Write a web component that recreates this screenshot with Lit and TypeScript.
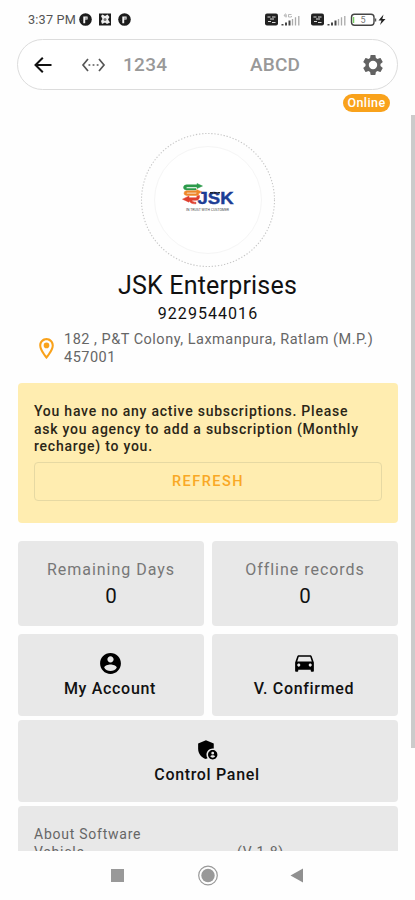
import { LitElement, html, css, svg } from "lit";
import { customElement, property } from "lit/decorators.js";

const account = svg`<path d="M12 2C6.48 2 2 6.48 2 12s4.48 10 10 10 10-4.48 10-10S17.52 2 12 2zm0 3c1.66 0 3 1.34 3 3s-1.34 3-3 3-3-1.34-3-3 1.340-3 3-3zm0 14.2c-2.500 0-4.710-1.280-6-3.220.030-1.990 4-3.080 6-3.080 1.990 0 5.970 1.090 6 3.080-1.290 1.940-3.500 3.220-6 3.220z"/>`;
const car = svg`<path d="M18.920 5.010C18.720 4.420 18.160 4 17.500 4h-11c-.660 0-1.210.420-1.420 1.010L3 11v8c0 .550.450 1 1 1h1c.550 0 1-.450 1-1v-1h12v1c0 .550.450 1 1 1h1c.550 0 1-.450 1-1v-8l-2.080-5.990zM6.500 15c-.830 0-1.500-.670-1.500-1.500S5.670 12 6.500 12s1.500.670 1.500 1.500S7.330 15 6.500 15zm11 0c-.830 0-1.500-.670-1.500-1.500s.670-1.500 1.500-1.500 1.500.670 1.500 1.500-.670 1.500-1.500 1.500zM5 10l1.500-4.500h11L19 10H5z"/>`;
const admin = svg`<path d="M17 11c.34 0 .67.04 1 .09V6.270L10.500 3 3 6.270v4.910c0 4.540 3.200 8.790 7.500 9.820.550-.130 1.080-.320 1.600-.550-.690-.980-1.100-2.170-1.100-3.450 0-3.310 2.690-6 6-6z"/><path fill-rule="evenodd" d="M17 12.500c-2.480 0-4.500 2.020-4.500 4.500s2.020 4.500 4.500 4.500 4.500-2.020 4.500-4.500-2.020-4.500-4.500-4.500zm0 1.700a1.350 1.350 0 1 1 0 2.700 1.350 1.350 0 0 1 0-2.700zm0 5.600c-1 0-1.850-.5-2.350-1.250.05-.75 1.600-1.150 2.350-1.150s2.300.4 2.350 1.150c-.5.75-1.350 1.250-2.350 1.250z"/>`;

@customElement("menu-tile")
class MenuTile extends LitElement {
  @property() label = "";
  @property({ attribute: false }) icon: unknown = null;
  static styles = css`
    :host { display: flex; flex-direction: column; align-items: center; box-sizing: border-box; height: 82px; padding-top: 17px; background: #e8e8e8; border-radius: 4px; }
    svg { width: 25px; height: 25px; fill: #000; display: block; margin-right: 2px; }
    span { font-size: 16px; line-height: 20px; margin-top: 3px; margin-right: 2px; font-weight: 500; letter-spacing: 0.68px; color: #111; white-space: nowrap; }
  `;
  render() {
    return html`<svg viewBox="0 0 24 24">${this.icon}</svg><span>${this.label}</span>`;
  }
}

@customElement("app-root")
class AppRoot extends LitElement {
  static styles = css`
    :host { display: flex; flex-direction: column; width: 415px; height: 900px; background: #fefefe; overflow: hidden; font-family: Roboto, sans-serif; color: #111; position: relative; }
    svg { display: block; flex: none; }
    .status { height: 39px; box-sizing: border-box; padding: 0 27px 0 28px; display: flex; align-items: center; justify-content: space-between; }
    .time { display: flex; align-items: center; font-size: 12.7px; color: #555; white-space: nowrap; }
    .clock { width: 51px; letter-spacing: 0.2px; }
    .bar { margin: 0 17px; height: 51px; box-sizing: border-box; border: 1px solid #dcdcdc; border-radius: 26px; display: flex; align-items: center; background: #fff; flex: none; color: #999; font-weight: 500; font-size: 19px; }
    .back { margin-left: 13px; }
    .dots { margin-left: 26px; }
    .num { margin-left: 17px; width: 127px; letter-spacing: 0.3px; }
    .abc { width: 111px; letter-spacing: 0.2px; }
    .online { align-self: flex-end; margin: 4px 25px 0 0; height: 18px; width: 47px; border-radius: 9px; background: #f9a21b; color: #fff; font-size: 12.5px; font-weight: 500; line-height: 18px; text-align: center; letter-spacing: 0.4px; flex: none; }
    .scroll { position: absolute; right: 0; top: 115px; width: 4px; height: 633px; background: #cbcbcb; }
    .content { height: 739px; overflow: hidden; flex: none; }
    .avatar { margin: 20px auto 0; width: 136px; height: 136px; }
    h1 { margin: 4px 0 0; font-size: 25px; line-height: 28px; font-weight: 400; text-align: center; letter-spacing: 0.2px; }
    .phone { font-size: 16px; line-height: 20px; margin: 4px 0 0 1px; text-align: center; letter-spacing: 1.05px; }
    .addr { display: flex; margin: 7px 0 0 34px; align-items: center; }
    .addr svg { position: relative; top: -1px; }
    .addr p { margin: 0 0 0 5px; font-size: 14.5px; line-height: 18px; color: #666; letter-spacing: 0.5px; white-space: nowrap; }
    .notice { margin: 16px 17px 0 18px; height: 140px; box-sizing: border-box; padding: 20px 16px 0; background: #ffedb0; border-radius: 4px; }
    .notice p { margin: 0; font-size: 14px; line-height: 17.7px; font-weight: 500; letter-spacing: 0.76px; color: #2b2617; white-space: nowrap; }
    .refresh { margin-top: 6px; height: 39px; box-sizing: border-box; border: 1px solid #e6d9a3; border-radius: 4px; text-align: center; line-height: 38px; color: #f9a825; font-size: 14.5px; font-weight: 500; letter-spacing: 1.5px; }
    .grid { margin: 17.500px 17px 0 18px; display: grid; grid-template-columns: 186px 1fr; column-gap: 8px; row-gap: 4px; }
    .stat { height: 85px; box-sizing: border-box; padding-top: 18px; margin-bottom: 4px; background: #e8e8e8; border-radius: 4px; text-align: center; }
    .label { font-size: 16px; line-height: 22px; color: #777; letter-spacing: 0.98px; }
    .value { font-size: 20.5px; line-height: 28px; margin-top: 1px; }
    .wide { grid-column: 1 / 3; }
    .about { height: 90px; background: #e8e8e8; border-radius: 4px; padding: 19px 16px 0; box-sizing: border-box; font-size: 14px; line-height: 18px; color: #666; letter-spacing: 0.75px; }
    .row { display: flex; }
    .row span:first-child { width: 203px; }
    .nav { height: 49px; }
  `;
  render() {
    const badge = svg`<circle cx="6.500" cy="6.500" r="6.300" fill="#1c1c1c"/><path d="M4.300 10.300V3.500h4.300v3H6.200v3.800z" fill="#f4f4f4"/><path d="M7 4.500v1.300M2 7l1 1" stroke="#333" stroke-width="1"/>`;
    const bars = svg`<path d="M.5 11V9.500h2V11zM4 11V8h2v3zM7.500 11V6h2v5z" fill="#444"/><path d="M11.500 11V4.500M14.500 11V2.800M17.800 11V1.500" stroke="#aaa" stroke-width="1.300"/>`;
    const volte = svg`<rect width="13" height="12" rx="2" fill="#222"/><path d="M2.500 3.500h3M7 3.500h3.500M3 8h3m1 1h3.500M5 5.500h4" stroke="#ddd" stroke-width="1.200" fill="none"/>`;
    return html`
      <div class="status">
        <div class="time">
          <span class="clock">3:37 PM</span>
          <svg width="54" height="13" viewBox="0 0 54 13">${badge}
            <g transform="translate(20 0)"><rect x="0" y=".5" width="12" height="12" fill="#1c1c1c"/><path d="M3.500 1.500 6 3l2.500-1.500L10.500 4 9 6.500l2 3-3 1.500-2-1.500-3 1.500-1-3 1.500-2-1.500-3z" fill="#eee"/><circle cx="6" cy="6.500" r="1.500" fill="#777"/></g>
            <g transform="translate(39 0)">${badge}</g>
          </svg>
        </div>
        <svg width="124" height="14" viewBox="0 0 124 14">
          <g transform="translate(1 .5)">${volte}</g>
          <path d="M21.500.5 20 3h3m-1-2v3.500M27.500 1.500h-3V4h3V3" stroke="#aaa" stroke-width=".8" fill="none"/>
          <g transform="translate(17 1.500)">${bars}</g>
          <g transform="translate(47 .5)">${volte}</g>
          <g transform="translate(63 1.500)">${bars}</g>
          <rect x="87.500" y="1.300" width="22.500" height="11" rx="3" fill="#fff" stroke="#444" stroke-width="1.400"/>
          <path d="M89.500 4v6" stroke="#78cf65" stroke-width="1.500"/><path d="M111.500 5.500v3" stroke="#555" stroke-width="1.500"/>
          <text x="96.500" y="10" font-size="9" fill="#777">5</text>
          <path d="M119.500 1.500 114.500 7.500h3l-1.500 4.500 5.500-6h-3.200z" fill="#222"/>
        </svg>
      </div>
      <div class="bar">
        <svg class="back" width="24" height="24" viewBox="0 0 24 24" fill="none" stroke="#111" stroke-width="2"><path d="M20.500 12H5M11.800 4.700 4.500 12l7.300 7.300"/></svg>
        <svg class="dots" width="25" height="24" viewBox="0 0 25 24" fill="none" stroke="#555" stroke-width="1.700"><path d="M7 6 2 12l5 6M18 6l5 6-5 6"/><path d="M7.500 12h1.800m2.300 0h1.800m2.300 0h1.800" stroke-width="1.600"/></svg>
        <span class="num">1234</span><span class="abc">ABCD</span>
        <svg width="24" height="24" viewBox="0 0 24 24" fill="#626262"><path fill-rule="evenodd" d="M19.430 12.980c.040-.320.070-.640.070-.980s-.030-.660-.070-.980l2.110-1.650c.190-.150.240-.420.120-.640l-2-3.460c-.120-.220-.390-.300-.610-.220l-2.490 1c-.520-.400-1.080-.730-1.690-.980l-.380-2.650C14.460 2.180 14.250 2 14 2h-4c-.250 0-.460.180-.490.420l-.380 2.650c-.610.250-1.170.590-1.690.980l-2.490-1c-.230-.090-.490 0-.610.220l-2 3.460c-.130.220-.070.490.120.640l2.110 1.650c-.040.320-.070.650-.070.980s.030.660.070.980l-2.110 1.650c-.190.150-.240.420-.120.640l2 3.460c.120.220.390.300.610.220l2.490-1c.520.400 1.080.730 1.690.980l.380 2.650c.030.240.240.420.490.420h4c.250 0 .460-.180.490-.420l.380-2.650c.610-.250 1.170-.590 1.690-.980l2.490 1c.230.090.490 0 .610-.220l2-3.460c.120-.220.070-.490-.120-.640l-2.110-1.650zM12 16.200a4.200 4.200 0 1 1 0-8.400 4.200 4.200 0 0 1 0 8.400z"/></svg>
      </div>
      <div class="online">Online</div>
      <div class="scroll"></div>
      <div class="content">
        <svg class="avatar" viewBox="0 0 136 136">
          <circle cx="68" cy="68" r="66.500" fill="none" stroke="#c6c6c6" stroke-width="1.100" stroke-dasharray="1.300 1.800"/>
          <circle cx="68" cy="68" r="53.500" fill="#fff" stroke="#f5f5f5"/>
          <path d="M62.500 54 57 51.500v1.300H46.500q-3 .3-3 2.700 0 2.200 3 2.500H56v-1.500h-8.500q-1.300 0-1.300-.8t1.300-.8H57v1.600z" fill="#2c9b4b" stroke="#2c9b4b" stroke-width=".5"/>
          <path d="M62 60 56.500 57.500v1.300H46.500q-2.500.3-2.500 2.500 0 2 2.500 2.200h12v-1.700h-11q-.8 0-.8-.6t.8-.6h9v2z" fill="#ef8728" stroke="#ef8728" stroke-width=".5"/>
          <path d="M42.500 67.200 49 64v1.700h6.500q1.200 0 1.500-1.500l2.500-.7q.5 4.500-3.500 4.800h-4q.5 2 4 2v1.500q-6 .3-6.500-3.300l-.5 1.700z" fill="#df3f2e" stroke="#df3f2e" stroke-width=".5"/>
          <text x="57.500" y="72.200" font-family="Liberation Sans" font-size="16" font-weight="700" fill="#1c3d95" stroke="#1c3d95" stroke-width=".4" textLength="36" lengthAdjust="spacingAndGlyphs">JSK</text>
          <path d="M70 60.800h10" stroke="#222" stroke-width="1.500" stroke-dasharray="3 .7"/>
          <text x="46" y="78.800" font-size="3.400" fill="#444" textLength="43" lengthAdjust="spacingAndGlyphs">IN TRUST WITH CUSTOMER</text>
        </svg>
        <h1>JSK Enterprises</h1>
        <div class="phone">9229544016</div>
        <div class="addr">
          <svg width="25" height="25" viewBox="0 0 24 24" fill="#f9a21b"><path fill-rule="evenodd" d="M12 2C8.130 2 5 5.130 5 9c0 5.250 7 13 7 13s7-7.750 7-13c0-3.870-3.130-7-7-7zM7 9c0-2.760 2.240-5 5-5s5 2.240 5 5c0 2.880-2.880 7.190-5 9.880C9.920 16.210 7 11.850 7 9z"/><circle cx="12" cy="9" r="2.700"/></svg>
          <p>182 , P&amp;T Colony, Laxmanpura, Ratlam (M.P.)<br />457001</p>
        </div>
        <div class="notice">
          <p>You have no any active subscriptions. Please<br />ask you agency to add a subscription (Monthly<br />recharge) to you.</p>
          <div class="refresh">REFRESH</div>
        </div>
        <div class="grid">
          <div class="stat"><div class="label">Remaining Days</div><div class="value">0</div></div>
          <div class="stat"><div class="label">Offline records</div><div class="value">0</div></div>
          <menu-tile label="My Account" .icon=${account}></menu-tile>
          <menu-tile label="V. Confirmed" .icon=${car}></menu-tile>
          <menu-tile class="wide" label="Control Panel" .icon=${admin}></menu-tile>
          <div class="about wide">About Software<div class="row"><span>Vehicle</span><span>(V 1.8)</span></div></div>
        </div>
      </div>
      <svg class="nav" width="415" height="49" viewBox="0 0 415 49">
        <rect x="111" y="18" width="13" height="13" fill="#999"/>
        <circle cx="208" cy="24.500" r="9.300" fill="none" stroke="#999" stroke-width="1.200"/><circle cx="208" cy="24.500" r="6.700" fill="#999"/>
        <path d="M303 17.500v14L290.500 24.500z" fill="#909090"/>
      </svg>
    `;
  }
}
